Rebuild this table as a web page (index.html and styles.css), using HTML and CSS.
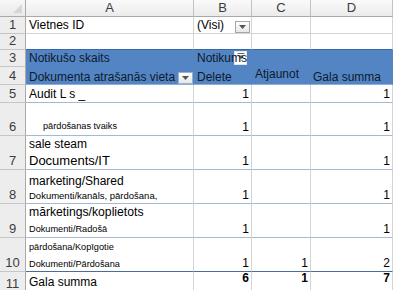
FILE: index.html
```html
<!DOCTYPE html>
<html>
<head>
<meta charset="utf-8">
<link rel="stylesheet" href="styles.css">
</head>
<body>
<div class="sheet">
  <div class="corner"><span class="tri"></span></div>
  <div class="ch">A</div><div class="ch">B</div><div class="ch">C</div><div class="ch">D</div>

  <div class="rh">1</div>
  <div class="c">Vietnes ID</div>
  <div class="c has-dd">(Visi)<span class="dd dd-b1"><svg width="7" height="4" viewBox="0 0 7 4"><path d="M0 0h7L3.5 4z" fill="#555"/></svg></span></div>
  <div class="c"></div><div class="c"></div>

  <div class="rh">2</div>
  <div class="c pre"></div><div class="c pre"></div><div class="c pre"></div><div class="c pre"></div>

  <div class="rh">3</div>
  <div class="c ph">Notikušo skaits</div>
  <div class="c ph has-dd"><span class="dd dd-b3"><svg width="8" height="7" viewBox="0 0 8 7"><path d="M0.5 0.5h7" stroke="#666" stroke-width="1"/><path d="M1 2.5h6L4 6.5z" fill="#666"/></svg></span><span class="over">Notikums</span></div>
  <div class="c ph"></div><div class="c ph"></div>

  <div class="rh">4</div>
  <div class="c ph ph4 has-dd">Dokumenta atrašanās vieta<span class="dd dd-a4"><svg width="7" height="4" viewBox="0 0 7 4"><path d="M0 0h7L3.5 4z" fill="#555"/></svg></span></div>
  <div class="c ph ph4">Delete</div>
  <div class="c ph ph4 raised">Atjaunot</div>
  <div class="c ph ph4 low">Gala summa</div>

  <div class="rh">5</div>
  <div class="c d">Audit L s _</div>
  <div class="c d n">1</div><div class="c d n"></div><div class="c d n">1</div>

  <div class="rh">6</div>
  <div class="c d"><span class="sm indent">pārdošanas tvaiks</span></div>
  <div class="c d n">1</div><div class="c d n"></div><div class="c d n">1</div>

  <div class="rh">7</div>
  <div class="c d"><span class="l1">sale steam</span><span class="big">Documents/IT</span></div>
  <div class="c d n">1</div><div class="c d n"></div><div class="c d n">1</div>

  <div class="rh">8</div>
  <div class="c d top"><span class="l1">marketing/Shared</span><span class="sm sm2 wide">Dokumenti/kanāls, pārdošana,</span></div>
  <div class="c d n">1</div><div class="c d n"></div><div class="c d n">1</div>

  <div class="rh">9</div>
  <div class="c d"><span class="l1 mk">mārketings/koplietots</span><span class="sm sm2">Dokumenti/Radošā</span></div>
  <div class="c d n">1</div><div class="c d n"></div><div class="c d n">1</div>

  <div class="rh">10</div>
  <div class="c d last"><span class="sm sm3">pārdošana/Kopīgotie</span><span class="sm">Dokumenti/Pārdošana</span></div>
  <div class="c d n last">1</div><div class="c d n last">1</div><div class="c d n last">2</div>

  <div class="rh">11</div>
  <div class="c tot">Gala summa</div>
  <div class="c tot n b">6</div><div class="c tot n b">1</div><div class="c tot n b">7</div>
</div>
</body>
</html>
```

FILE: styles.css
```css
html, body {
  margin: 0;
  padding: 0;
  background: #ffffff;
  overflow: hidden;
}

body {
  font-family: "Liberation Sans", Arial, sans-serif;
  color: #000;
}

.sheet {
  display: grid;
  grid-template-columns: 26px 168px 58px 59px 82px;
  grid-template-rows: 17px 17px 16px 17px 18px 18px 33px 34px 34px 34px 34px 21px;
  width: 393px;
}

.sheet > div {
  box-sizing: border-box;
  border-right: 1px solid #d4d4d4;
  border-bottom: 1px solid #d4d4d4;
  overflow: hidden;
  white-space: nowrap;
}

.corner {
  position: relative;
  background: linear-gradient(#f7f7f7, #e9e9e9);
  border-right-color: #a9a9a9 !important;
  border-bottom-color: #a9a9a9 !important;
}

.tri {
  position: absolute;
  right: 3px;
  bottom: 3px;
  width: 0;
  height: 0;
  border-left: 9px solid transparent;
  border-bottom: 9px solid #d6d6d6;
}

.ch {
  background: linear-gradient(#fafafa, #ebebeb);
  border-right-color: #c2c2c2 !important;
  border-bottom-color: #a9a9a9 !important;
  font-size: 13px;
  line-height: 16px;
  text-align: center;
  color: #3c3c3c;
}

.rh {
  background: #ededed;
  border-right-color: #a9a9a9 !important;
  border-bottom-color: #c6c6c6 !important;
  font-size: 13px;
  color: #3c3c3c;
  display: flex;
  align-items: flex-end;
  justify-content: center;
  padding-bottom: 1px;
  line-height: 15px;
}

.c {
  position: relative;
  display: flex;
  flex-direction: column;
  justify-content: flex-end;
  font-size: 12px;
  line-height: 14px;
  padding: 0 3px 1px 3px;
}

.pre {
  border-bottom-color: #3a67a6 !important;
}

.ph {
  background: #5385c5;
  border-right-color: #5385c5 !important;
  border-bottom-color: #5385c5 !important;
  color: #0f1a2b;
}

.ph4 {
  border-bottom-color: #8fb0d8 !important;
  padding-bottom: 0;
}

.over {
  position: relative;
  z-index: 1;
}

.raised {
  padding-bottom: 3px;
}

.low {
  padding-left: 2px;
  padding-bottom: 0;
}

.d {
  border-bottom-color: #a5bad2 !important;
}

.n {
  text-align: right;
  align-items: flex-end;
  padding-right: 2px;
}

.sm {
  font-size: 9.2px;
  line-height: 12px;
}

.wide {
  font-size: 9.5px;
}

.indent {
  padding-left: 14px;
  padding-bottom: 2px;
}

.l1 {
  line-height: 13px;
  padding-bottom: 2px;
}

.big {
  font-size: 13px;
  line-height: 15px;
}

.mk {
  font-size: 12.2px;
  padding-bottom: 4px;
}

.sm2 {
  padding-bottom: 1px;
}

.sm3 {
  padding-bottom: 5px;
}

.top {
  justify-content: flex-start;
  padding-top: 5px;
}

.last {
  border-bottom-color: #4b6c98 !important;
}

.tot {
  border-bottom: 3px solid #4f7fbd !important;
  padding-bottom: 0;
  line-height: 15px;
}

.tot.n {
  padding-bottom: 4px;
}

.b {
  font-weight: bold;
}

.dd {
  position: absolute;
  box-sizing: border-box;
  display: flex;
  align-items: center;
  justify-content: center;
  border: 1px solid #a7a7a7;
  background: linear-gradient(#ffffff, #e7e7e7);
}

.dd-b1 {
  right: 1px;
  top: 4px;
  width: 15px;
  height: 12px;
}

.dd-a4 {
  right: 0;
  top: 5px;
  width: 15px;
  height: 12px;
  border-color: #9fb0c6;
}

.dd-b3 {
  right: 4px;
  top: 1px;
  width: 13px;
  height: 14px;
  align-items: flex-start;
  padding-top: 1px;
  border-color: #dfe6ef;
  background: #ffffff;
}
```
